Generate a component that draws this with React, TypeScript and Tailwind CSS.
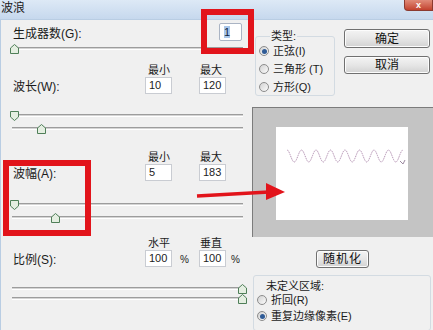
import React from "react";

type ThumbDef = { x: number; up?: boolean };

const Thumb = ({ x, up }: ThumbDef) => (
  <svg
    width="9"
    height="10"
    viewBox="0 0 9 10"
    className="absolute top-[-4px]"
    style={{ left: x - 4 }}
  >
    <polygon
      points={up ? "4.5,0.5 8.5,4 8.5,9.5 0.5,9.5 0.5,4" : "0.5,0.5 8.5,0.5 8.5,6 4.5,9.5 0.5,6"}
      fill="#e4eee1"
      stroke="#4f7f58"
    />
  </svg>
);

const Track = ({ thumbs }: { thumbs: ThumbDef[] }) => (
  <div className="relative h-[3px] w-[231px] border-t border-b border-t-[#9c9c9c] border-b-white bg-[#d4d4d4]">
    {thumbs.map((t, i) => (
      <Thumb key={i} {...t} />
    ))}
  </div>
);

const Field = ({ v }: { v: string }) => (
  <div className="h-[17px] w-[27px] border border-[#c9ccd2] bg-white pl-[3px] text-[11px] leading-[15px] text-[#222]">
    {v}
  </div>
);

const Radio = ({ on }: { on?: boolean }) => (
  <span className="inline-flex h-[10px] w-[10px] shrink-0 items-center justify-center rounded-full border border-[#8c8c8c] bg-linear-to-br from-[#d2d2d2] to-[#fbfbfb]">
    {on && <span className="h-[5px] w-[5px] rounded-full bg-[#2f5b96]" />}
  </span>
);

const Button = ({ children, cls }: { children: React.ReactNode; cls: string }) => (
  <div
    className={`flex items-center justify-center rounded-[3px] border border-[#707070] bg-linear-to-b from-[#f4f4f4] via-[#e6e6e6] to-[#d2d2d2] text-[12px] text-[#111] shadow-[inset_0_0_0_1px_#fcfcfc] ${cls}`}
  >
    {children}
  </div>
);

const Params = (props: {
  label: string;
  h1: string;
  h2: string;
  v1: string;
  v2: string;
  pct?: boolean;
}) => (
  <div>
    <div className="flex h-[12px] text-[11px] leading-[12px]">
      <span className="ml-[136px] w-[52px]">{props.h1}</span>
      <span>{props.h2}</span>
    </div>
    <div className="mt-[1px] flex items-end">
      <span className="w-[133px] pl-[1px] text-[12px] leading-[14px]">{props.label}</span>
      <Field v={props.v1} />
      <span className="w-[27px] pl-[8px] text-[10px] leading-[14px]">{props.pct ? "%" : ""}</span>
      <Field v={props.v2} />
      {props.pct && <span className="pl-[5px] text-[10px] leading-[14px]">%</span>}
    </div>
  </div>
);

const Wave = () => {
  const pts: string[] = [];
  for (let i = 0; i <= 232; i++) {
    const x = 11 + i * 0.5;
    const y = 29 - 6 * Math.sin(((x - 11) / 14.5) * Math.PI * 2 + Math.PI / 2);
    pts.push(`${x.toFixed(1)},${y.toFixed(1)}`);
  }
  return (
    <svg width="132" height="93" viewBox="0 0 132 93">
      <polyline points={pts.join(" ")} fill="none" stroke="#b796b6" strokeWidth="1" strokeDasharray="1.6 0.8" />
      <polyline points="124,34 127,37 129,33" fill="none" stroke="#9c8aa0" strokeWidth="1" />
    </svg>
  );
};

export default function App() {
  return (
    <div className="relative h-[330px] w-[433px] overflow-hidden bg-[#f0f0f0] font-['Liberation_Sans','Noto_Sans_CJK_SC',sans-serif] text-[#1b1b1b]">
      {/* title bar */}
      <div className="flex h-[19px] items-start bg-linear-to-b from-[#dde9f6] to-[#c6d8ed]">
        <span className="pl-[1px] pt-[2px] text-[12px] leading-[13px] text-[#1d1d1d]">波浪</span>
        <div className="ml-auto flex h-[11px] w-[29px] items-center justify-center rounded-bl-[4px] border border-t-0 border-[#8b3a30] bg-linear-to-b from-[#e08a78] to-[#c2412e] text-[9px] leading-none font-bold text-white">
          x
        </div>
      </div>

      <div className="flex h-[311px] border-l border-t border-[#b9cde3]">
        {/* left column */}
        <div className="w-[251px] shrink-0 pl-[11px]">
          <div className="mt-[3px] flex h-[18px] items-center">
            <span className="pl-[1px] pt-[4px] text-[12px]">生成器数(G):</span>
            <div className="ml-auto mr-[10px] h-[18px] w-[23px] rounded-[2px] border border-[#aab4c4] bg-white pl-[4px] pt-[1px] text-[11px] leading-[14px]">
              <span className="bg-[#a9c7ea] text-[#10243f]">1</span>
            </div>
          </div>
          <div className="mt-[6px]">
            <Track thumbs={[{ x: 2, up: true }]} />
          </div>

          <div className="mt-[14px]">
            <Params label="波长(W):" h1="最小" h2="最大" v1="10" v2="120" />
          </div>
          <div className="mt-[20px] flex flex-col gap-[10px]">
            <Track thumbs={[{ x: 2 }]} />
            <Track thumbs={[{ x: 29, up: true }]} />
          </div>

          <div className="mt-[21px]">
            <Params label="波幅(A):" h1="最小" h2="最大" v1="5" v2="183" />
          </div>
          <div className="mt-[22px] flex flex-col gap-[10px]">
            <Track thumbs={[{ x: 2 }]} />
            <Track thumbs={[{ x: 43, up: true }]} />
          </div>

          <div className="mt-[18px]">
            <Params label="比例(S):" h1="水平" h2="垂直" v1="100" v2="100" pct />
          </div>
          <div className="mt-[20px] flex flex-col gap-[7px]">
            <Track thumbs={[{ x: 230, up: true }]} />
            <Track thumbs={[{ x: 230, up: true }]} />
          </div>
        </div>

        {/* right column */}
        <div className="w-[181px] shrink-0">
          <div className="flex items-start">
            <fieldset className="ml-[3px] mt-[10px] h-[66px] w-[80px] rounded-[3px] border border-[#d3dbe2] px-[3px]">
              <legend className="ml-[11px] px-[1px] text-[11px] leading-[12px]">类型:</legend>
              <div className="flex h-[18px] items-center gap-[4px] text-[11px]">
                <Radio on />
                <span>正弦(I)</span>
              </div>
              <div className="flex h-[18px] items-center gap-[4px] text-[11px]">
                <Radio />
                <span>三角形 (T)</span>
              </div>
              <div className="flex h-[18px] items-center gap-[4px] text-[11px]">
                <Radio />
                <span>方形(Q)</span>
              </div>
            </fieldset>
            <div className="ml-[9px] mt-[9px] flex flex-col gap-[8px]">
              <Button cls="h-[19px] w-[86px]">确定</Button>
              <Button cls="h-[18px] w-[86px]">取消</Button>
            </div>
          </div>

          <div className="mt-[11px] h-[130px] w-[181px] border-l border-t border-[#7c7c7c] bg-[#c4c4c4] pl-[23px] pt-[19px]">
            <div className="h-[93px] w-[132px] bg-white">
              <Wave />
            </div>
          </div>

          <Button cls="ml-[64px] mt-[13px] h-[18px] w-[53px] tracking-[1px]">随机化</Button>

          <div className="ml-[1px] mt-[7px] h-[56px] w-[178px] rounded-[3px] border border-[#d3dbe2] pl-[3px] pt-[5px]">
            <div className="pl-[9px] text-[11px] leading-[11px]">未定义区域:</div>
            <div className="flex h-[16px] items-center gap-[4px] text-[11px]">
              <Radio />
              <span>折回(R)</span>
            </div>
            <div className="flex h-[16px] items-center gap-[4px] text-[11px]">
              <Radio on />
              <span>重复边缘像素(E)</span>
            </div>
          </div>
        </div>
      </div>

      {/* annotations */}
      <div className="absolute left-[201px] top-[9px] h-[45px] w-[53px] border-[6px] border-[#e2141b]" />
      <div className="absolute left-[3px] top-[160px] h-[76px] w-[88px] border-[6px] border-[#e2141b]" />
      <svg className="absolute left-[190px] top-[178px]" width="100" height="26" viewBox="0 0 100 26">
        <line x1="7" y1="18" x2="79" y2="14" stroke="#e2141b" strokeWidth="3.5" />
        <polygon points="76,5 95,14 76,22" fill="#e2141b" />
      </svg>
    </div>
  );
}
